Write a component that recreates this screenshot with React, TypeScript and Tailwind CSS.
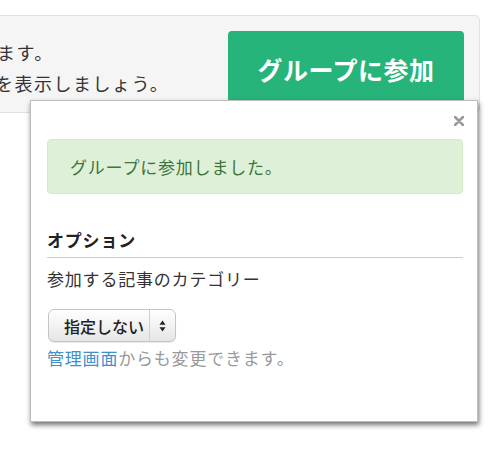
export default function App() {
    return (
        <div className="relative h-[451px] w-[500px] overflow-hidden bg-white text-[#333] font-['Noto_Sans_CJK_JP',sans-serif]">

            {/* グループ参加パネル（左側は画面外） */}
            <div className="pt-[15px]">
                <div className="-ml-[10px] flex w-[490px] rounded-r-[5px] border border-[#e1e1e1] bg-[#f5f5f5] pt-[15px] pr-[15px] pb-[3px]">
                    <div className="flex-1 overflow-hidden pt-[6px] text-[18px] leading-[31px] tracking-[1.5px] whitespace-nowrap">
                        <div className="-ml-[189px]">参加すると更新が届きます。</div>
                        <div className="-ml-[190px]">グループの最新の記事を表示しましょう。</div>
                    </div>
                    <button className="flex h-[78px] w-[236px] items-center justify-center rounded-[4px] bg-[#27b47a] text-[25px] font-bold tracking-[0.5px] text-white">
                        グループに参加
                    </button>
                </div>
            </div>

            {/* ポップアップ */}
            <div className="absolute left-[30px] top-[100px] w-[448px] border border-[#bdbdbd] bg-white pt-[38px] pr-[14px] pb-[51px] pl-4 tracking-[0.8px] shadow-[1px_3px_5px_rgba(0,0,0,0.55)]">
                <button className="absolute right-[13px] top-[15px]" title="閉じる">
                    <svg width="10" height="10" viewBox="0 0 10 10">
                        <path d="M1 1L9 9M9 1L1 9" stroke="#9a9a9a" strokeWidth="2.6" strokeLinecap="round" />
                    </svg>
                </button>

                <div className="flex h-[55px] items-center rounded-[4px] border border-[#d6e9c6] bg-[#dff0d8] pl-[22px] text-[17px] text-[#3c763d]">
                    グループに参加しました。
                </div>

                <div className="mt-[34px] border-b border-[#cccccc] pb-[5px] text-[17px] font-bold leading-[24px] text-[#222]">
                    オプション
                </div>
                <div className="mt-[9px] text-[17px] leading-[24px]">参加する記事のカテゴリー</div>

                <div className="mt-[18px] ml-px flex h-[33px] w-[128px] items-center rounded-[6px] border border-[#c4c4c4] bg-gradient-to-b from-white to-[#e6e6e6] tracking-normal shadow-[0_1px_1px_rgba(0,0,0,0.08)]">
                    <span className="flex-1 pl-[15px] text-[16px] font-medium text-[#222]">指定しない</span>
                    <span className="flex h-full w-[26px] items-center justify-center border-l border-[#cfcfcf]">
                        <svg width="7" height="12" viewBox="0 0 7 12">
                            <path d="M3.5 0.5L6.5 4.8H0.5Z" fill="#222" />
                            <path d="M3.5 11.5L6.5 7.2H0.5Z" fill="#222" />
                        </svg>
                    </span>
                </div>

                <div className="mt-[4px] text-[17px] leading-[24px] text-[#999]">
                    <a className="text-[#3f8fc8]">管理画面</a>からも変更できます。
                </div>
            </div>
        </div>
    );
}
